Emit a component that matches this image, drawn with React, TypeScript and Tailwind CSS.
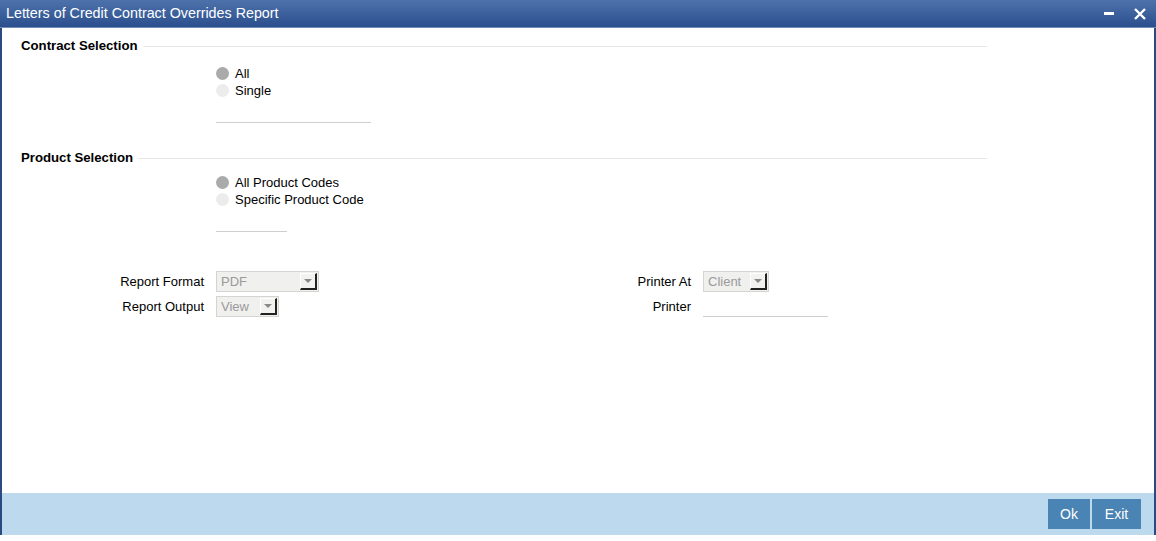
import React from "react"

const font = { fontFamily: '"Liberation Sans", Arial, sans-serif' }

function Radio({ checked, label }: { checked: boolean; label: string }) {
  return (
    <div className="flex items-center h-[17px] ml-[214px]">
      <span
        className={`w-[13px] h-[13px] rounded-full ${checked ? "bg-[#aaaaaa]" : "bg-[#ececec]"}`}
      />
      <span className="ml-[6px] text-[13px] text-black leading-none">{label}</span>
    </div>
  )
}

function SectionHeader({ title, mt }: { title: string; mt: string }) {
  return (
    <div className={`flex items-center h-[16px] w-[985px] ${mt}`}>
      <span className="ml-[19px] text-[13.2px] font-bold text-black whitespace-nowrap">{title}</span>
      <span className="ml-[5px] flex-1 h-px bg-[#e6e6e6]" />
    </div>
  )
}

function Select({ value, width }: { value: string; width: string }) {
  return (
    <div className={`flex items-center h-[21px] ${width} bg-[#f0f0ee] border border-[#d4d4d0]`}>
      <span className="flex-1 pl-[4px] text-[13px] text-[#9a9a9a] leading-none">{value}</span>
      <span className="w-[17px] h-[17px] mr-[1px] flex items-center justify-center bg-[#f2f2f0] border-r-2 border-b-2 border-r-[#222] border-b-[#222] border-t border-l border-t-white border-l-white">
        <span className="w-0 h-0 border-l-[4px] border-r-[4px] border-t-[4px] border-l-transparent border-r-transparent border-t-[#8a8a8a]" />
      </span>
    </div>
  )
}

export default function App() {
  return (
    <div className="w-[1156px] h-[541px] bg-white flex flex-col" style={font}>
      <div className="h-[535px] flex flex-col">
        {/* Title bar */}
        <div className="h-[28px] flex items-center bg-gradient-to-b from-[#4d72ab] to-[#2b4f8d] border-b border-[#6f8fb8]">
          <span className="ml-[6px] text-[14.3px] text-white flex-1">
            Letters of Credit Contract Overrides Report
          </span>
          <span className="w-[10px] h-[3px] bg-white mr-[20px]" />
          <svg width="12" height="12" viewBox="0 0 12 12" className="mr-[10px]">
            <path d="M1 1L11 11M11 1L1 11" stroke="white" strokeWidth="2.4" />
          </svg>
        </div>

        {/* Body */}
        <div className="flex-1 flex flex-col border-l-2 border-r-2 border-[#2b4a82]">
          <SectionHeader title="Contract Selection" mt="mt-[10px]" />
          <div className="mt-[11px]">
            <Radio checked label="All" />
            <Radio checked={false} label="Single" />
          </div>
          <div className="mt-[23px] ml-[214px] w-[155px] h-px bg-[#cfcfcf]" />

          <SectionHeader title="Product Selection" mt="mt-[27px]" />
          <div className="mt-[8px]">
            <Radio checked label="All Product Codes" />
            <Radio checked={false} label="Specific Product Code" />
          </div>
          <div className="mt-[23px] ml-[214px] w-[71px] h-px bg-[#cfcfcf]" />

          <div className="mt-[39px] grid grid-cols-[202px_415px_72px_auto] gap-y-[4px] text-[13px] text-black">
            <span className="h-[21px] flex items-center justify-end">Report Format</span>
            <div className="pl-[12px]">
              <Select value="PDF" width="w-[103px]" />
            </div>
            <span className="h-[21px] flex items-center justify-end">Printer At</span>
            <div className="pl-[12px]">
              <Select value="Client" width="w-[66px]" />
            </div>

            <span className="h-[21px] flex items-center justify-end">Report Output</span>
            <div className="pl-[12px]">
              <Select value="View" width="w-[63px]" />
            </div>
            <span className="h-[21px] flex items-center justify-end">Printer</span>
            <div className="pl-[12px] flex items-end">
              <span className="w-[125px] h-px bg-[#cfcfcf]" />
            </div>
          </div>

          <div className="flex-1" />

          {/* Footer */}
          <div className="h-[42px] bg-[#bdd9ed] flex items-center justify-end pr-[13px] gap-[2px]">
            <button className="w-[42px] h-[30px] bg-[#4a84b4] text-white text-[14px]">Ok</button>
            <button className="w-[49px] h-[30px] bg-[#4a84b4] text-white text-[14px]">Exit</button>
          </div>
        </div>
      </div>
    </div>
  )
}
